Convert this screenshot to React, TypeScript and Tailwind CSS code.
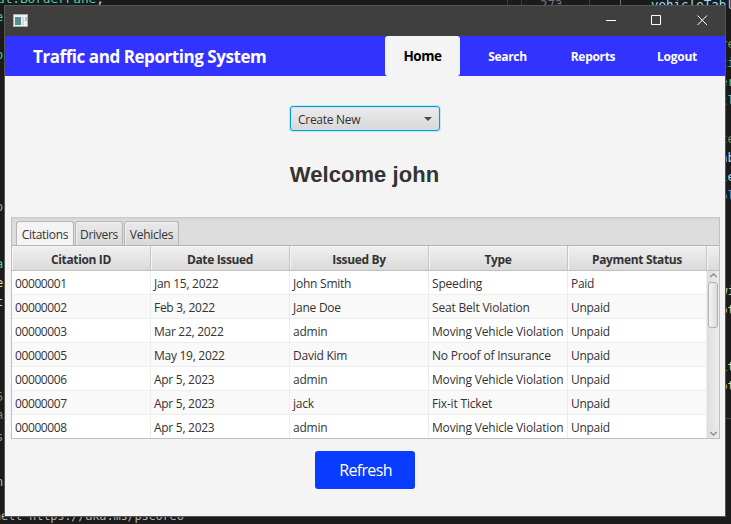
import React from "react";

const rows = [
  ["00000001", "Jan 15, 2022", "John Smith", "Speeding", "Paid"],
  ["00000002", "Feb 3, 2022", "Jane Doe", "Seat Belt Violation", "Unpaid"],
  ["00000003", "Mar 22, 2022", "admin", "Moving Vehicle Violation", "Unpaid"],
  ["00000005", "May 19, 2022", "David Kim", "No Proof of Insurance", "Unpaid"],
  ["00000006", "Apr 5, 2023", "admin", "Moving Vehicle Violation", "Unpaid"],
  ["00000007", "Apr 5, 2023", "jack", "Fix-it Ticket", "Unpaid"],
  ["00000008", "Apr 5, 2023", "admin", "Moving Vehicle Violation", "Unpaid"],
];

const columns = ["Citation ID", "Date Issued", "Issued By", "Type", "Payment Status"];

const cellTracking = [
  "tracking-[-0.4px]",
  "tracking-[-0.28px]",
  "tracking-[-0.24px]",
  "tracking-[-0.19px]",
  "tracking-[-0.28px]",
];

// Editor text that shows around the window's edges.
const leftCode = [
  { t: "e", y: 9, c: "text-[#4ec9b0]" },
  { t: "o", y: 47, c: "text-[#4ec9b0]" },
  { t: "o", y: 199, c: "text-[#6fb8e0]" },
  { t: "a", y: 256, c: "text-[#4ec9b0]" },
  { t: "e", y: 275, c: "text-[#dcdcaa]" },
  { t: "t", y: 294, c: "text-[#9cdcfe]" },
  { t: "5", y: 389, c: "text-[#6a9955]" },
  { t: "a", y: 407, c: "text-[#6a9955]" },
  { t: "s", y: 429, c: "text-[#8a8f94]" },
  { t: "n", y: 474, c: "text-[#b8b8b8]" },
];

const rightCode = [
  { t: "re", y: 36, c: "text-[#6a9955]" },
  { t: "ti", y: 55, c: "text-[#4ec9b0]" },
  { t: "er", y: 74, c: "text-[#4ec9b0]" },
  { t: "tl", y: 93, c: "text-[#4ec9b0]" },
  { t: "te", y: 131, c: "text-[#6a9955]" },
  { t: "ab", y: 150, c: "text-[#9cdcfe]" },
  { t: "le", y: 169, c: "text-[#9cdcfe]" },
  { t: "bl", y: 188, c: "text-[#4fa0e0]" },
  { t: "wi", y: 283, c: "text-[#dcdcaa]" },
  { t: "ot", y: 302, c: "text-[#dcdcaa]" },
  { t: "it", y: 359, c: "text-[#dcdcaa]" },
  { t: "ot", y: 378, c: "text-[#dcdcaa]" },
];

function Editor() {
  return (
    <div className="absolute inset-0 font-['DejaVu_Sans_Mono',monospace] text-[12px] leading-[16px] whitespace-pre">
      <span className="absolute -left-[3px] -top-[9px] text-[13px] tracking-[-0.2px] text-[#4ec9b0]">at.BorderPane<span className="text-[#d4d4d4]">;</span></span>
      <span className="absolute left-[540px] -top-[3px] text-[12.5px] text-[#6e7681]">273</span>
      <span className="absolute left-[651px] -top-[3px] text-[12.5px] text-[#9cdcfe]">vehicleTable</span>
      <div className="absolute left-[507px] top-0 h-[6px] w-px bg-[#3a3a3a]" />
      <div className="absolute left-[521px] top-0 h-[6px] w-px bg-[#3a3a3a]" />
      <div className="absolute left-[589px] top-0 h-[6px] w-px bg-[#404040]" />
      <div className="absolute left-[620px] top-0 h-[6px] w-px bg-[#707070]" />
      {leftCode.map((l) => (
        <span key={l.y} className={`absolute -left-[4px] ${l.c}`} style={{ top: l.y }}>{l.t}</span>
      ))}
      {rightCode.map((l) => (
        <span key={l.y} className={`absolute left-[720px] text-[12.5px] ${l.c}`} style={{ top: l.y }}>{l.t}</span>
      ))}
      <div className="absolute left-[726px] top-[418px] h-px w-[5px] bg-[#414141]" />
      <div className="absolute left-0 top-[418px] h-px w-[4px] bg-[#414141]" />
      <span className="absolute -left-[6px] top-[508px] tracking-[-0.2px] text-[#b5b5b5]">hell https://aka.ms/pscore6</span>
    </div>
  );
}

function TitleBar() {
  return (
    <div className="flex h-[30px] items-center justify-between bg-[#3f3f3f] pl-2 pr-[17px]">
      <svg width="15" height="13" viewBox="0 0 15 13" className="mb-[2px]" shapeRendering="crispEdges">
        <defs>
          <linearGradient id="pane" x1="0" y1="0" x2="1" y2="1">
            <stop offset="0" stopColor="#5d83a5" />
            <stop offset="1" stopColor="#4f9d6e" />
          </linearGradient>
        </defs>
        <path d="M0 0h15v13H0z" fill="#a9adaf" />
        <path d="M1 1h13v11H1z" fill="#f1f1f1" />
        <path d="M2 3h6v8H2z" fill="url(#pane)" />
        <path d="M9 3h2v8H9z" fill="#d6d7da" />
        <path d="M12 3h2v4h-2z" fill="#a6c9bf" />
      </svg>
      <svg width="102" height="12" viewBox="0 0 102 12" className="mb-[2px]" fill="none" stroke="#fff">
        <path d="M0 6.500h10" />
        <path d="M45.500 1.500h9v9h-9z" />
        <path d="M91.500 1.500l9.500 9.500M101 1.500L91.500 11" />
      </svg>
    </div>
  );
}

function Header() {
  return (
    <div className="flex h-10 bg-[#3333ff] font-bold text-white">
      <div className="w-[380px] pl-7 text-[17px] leading-[41px] tracking-[-0.44px]">Traffic and Reporting System</div>
      <div className="w-[75px] rounded-[3px] bg-[#f4f4f4] text-center text-[13.5px] leading-[41px] tracking-[-0.5px] text-black">Home</div>
      <div className="w-[95px] text-center text-[12px] leading-[42px] tracking-[-0.3px]">Search</div>
      <div className="w-[76px] text-center text-[12px] leading-[42px] tracking-[-0.3px]">Reports</div>
      <div className="w-[92px] text-center text-[12px] leading-[42px] tracking-[-0.25px]">Logout</div>
    </div>
  );
}

function Tab({ label, active, width }: { label: string; active?: boolean; width: string }) {
  return (
    <div
      className={`${width} h-6 rounded-t-[3px] border border-b-0 border-[#b4b4b4] text-center text-[12px] leading-[26px] tracking-[-0.28px] ${
        active ? "bg-[#f4f4f4]" : "bg-linear-to-b from-[#e9e9e9] to-[#d9d9d9] shadow-[inset_1px_1px_0_#f2f2f2]"
      }`}
    >
      {label}
    </div>
  );
}

function ScrollBar() {
  return (
    <div className="flex w-[12px] flex-col items-center bg-linear-to-r from-[#dedede] to-[#ececec]">
      <svg width="9" height="11" viewBox="0 0 9 11" fill="none" stroke="#8b8b8b" strokeWidth="1.300">
        <path d="M1.200 6L4.500 3L7.800 6" />
      </svg>
      <div className="h-[46px] w-[10px] rounded-[3px] border border-[#b0b0b0] bg-linear-to-r from-[#f4f4f4] to-[#dcdcdc]" />
      <div className="flex-1" />
      <svg width="9" height="9" viewBox="0 0 9 9" fill="none" stroke="#8b8b8b" strokeWidth="1.300">
        <path d="M1.200 3L4.500 6L7.800 3" />
      </svg>
    </div>
  );
}

function RecordsPane() {
  return (
    <div className="mx-[6px] h-[222px] w-[709px] border-x border-b border-[#c0c0c0]">
      <div className="flex h-[29px] items-end gap-px border-b border-[#b4b4b4] bg-[#dddddd] pl-1 shadow-[inset_0_1px_0_#cacaca,inset_0_3px_3px_-1px_#d0d0d0]">
        <Tab label="Citations" width="w-[58px]" active />
        <Tab label="Drivers" width="w-[48px]" />
        <Tab label="Vehicles" width="w-[55px]" />
      </div>
      <div className="flex h-[25px] border-b border-[#c0c0c0] bg-linear-to-b from-[#f0f0f0] to-[#dadada] text-center text-[12px] font-bold leading-[28px] tracking-[-0.35px]">
        {columns.map((c) => (
          <div key={c} className="w-[139px] shrink-0 border-r border-[#c4c4c4] shadow-[inset_1px_1px_0_#f6f6f6] last-of-type:border-r-0">{c}</div>
        ))}
        <div className="flex-1 shadow-[inset_1px_1px_0_#f6f6f6]" />
      </div>
      <div className="flex h-[167px]">
        <div className="w-[695px] overflow-hidden">
          {rows.map((r, i) => (
            <div key={r[0]} className={`flex h-6 border-b border-[#ededed] ${i % 2 ? "bg-[#f9f9f9]" : "bg-white"}`}>
              {r.map((v, j) => (
                <div key={j} className={`h-[23px] w-[139px] shrink-0 border-r border-[#ededed] pl-[3px] text-[12px] leading-[25px] whitespace-nowrap ${cellTracking[j]}`}>{v}</div>
              ))}
            </div>
          ))}
        </div>
        <ScrollBar />
      </div>
    </div>
  );
}

export default function App() {
  return (
    <div className="relative h-[524px] w-[731px] overflow-hidden bg-[#1b1b1b]">
      <Editor />
      <div className="absolute left-[4px] top-[5px] flex h-[512px] w-[722px] flex-col border border-[#555555] bg-[#f4f4f4] font-['Open_Sans','Noto_Sans',sans-serif] text-[#333333]">
        <TitleBar />
        <Header />
        <div className="flex flex-col items-center">
          <div className="mt-[30px] flex h-[25px] w-[150px] items-center justify-between rounded-[3px] border border-[#039ed3] bg-linear-to-b from-[#ececec] to-[#d8d8d8] pl-[7px] pr-[7px] text-[12px] tracking-[-0.28px] shadow-[0_0_0_1px_#c4e5f2,inset_0_0_0_1px_#d3e2ea]">
            <span className="pt-0.5">Create New</span>
            <svg width="8" height="4" viewBox="0 0 8 4"><path d="M0 0h8L4 4z" fill="#4c4c4c" /></svg>
          </div>
          <h1 className="mt-[30px] h-[27px] pr-px font-['Liberation_Sans',Arial,sans-serif] text-[22px] font-bold leading-[28px] tracking-[0.05px]">Welcome john</h1>
        </div>
        <div className="mt-[29px]"><RecordsPane /></div>
        <button className="mx-auto mt-3 h-[38px] w-[100px] rounded-[3px] bg-[#0a3cff] pl-px text-[16px] leading-[38px] tracking-[-0.65px] text-white">Refresh</button>
      </div>
    </div>
  );
}
